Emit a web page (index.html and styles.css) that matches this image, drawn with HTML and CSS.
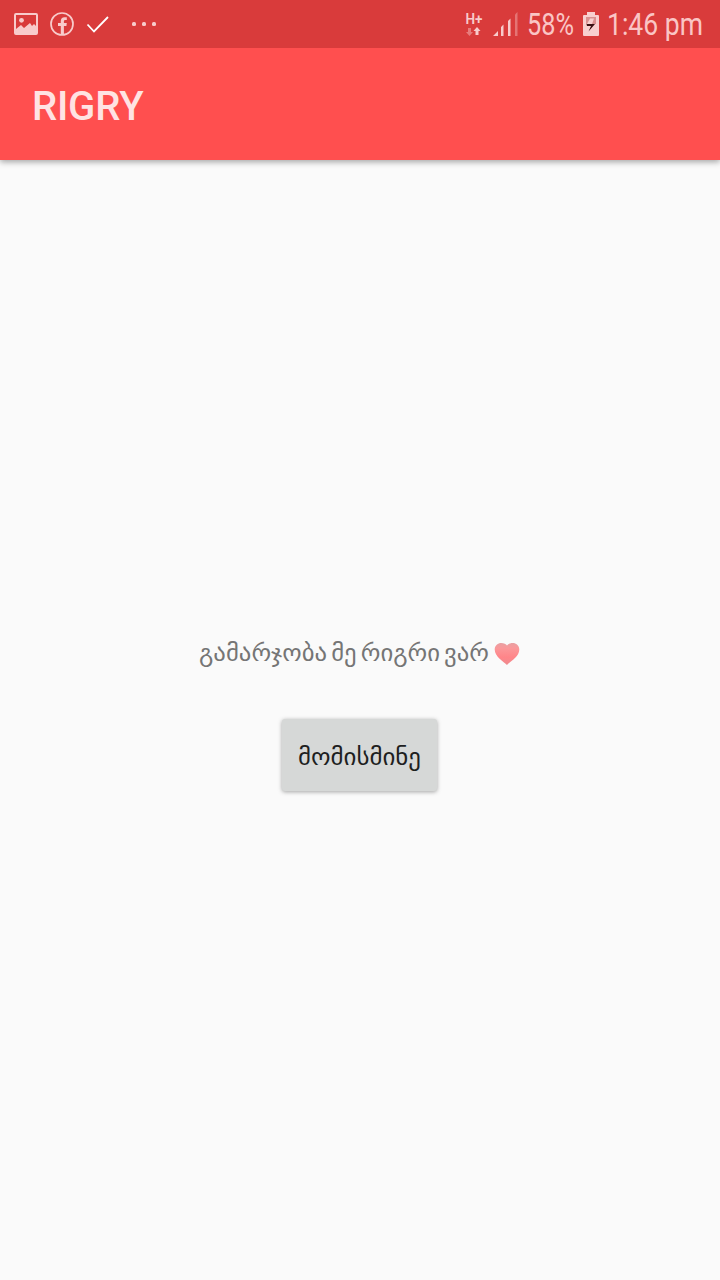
FILE: index.html
```html
<!DOCTYPE html>
<html lang="ka">
<head>
<meta charset="utf-8">
<title>RIGRY</title>
<link rel="stylesheet" href="styles.css">
</head>
<body>
<div class="screen">
  <header class="status">
    <div class="notifications">
      <svg width="24" height="22" viewBox="0 0 24 22"><path fill="currentColor" fill-rule="evenodd" d="M2 0h20q2 0 2 2v18q0 2-2 2H2q-2 0-2-2V2Q0 0 2 0zM2 2v14l5-4 3 3 6-5 2 3 2-2 2 2V2z"/><circle cx="7.5" cy="7.3" r="2.4" fill="currentColor"/></svg>
      <svg width="24" height="24" viewBox="0 0 24 24"><circle cx="12" cy="12" r="11" fill="none" stroke="currentColor" stroke-width="1.7"/><path fill="currentColor" d="M10.800 23V14H8v-3h2.800V9q0-3.800 3.800-3.800h2.200V8h-1.500q-1.400 0-1.400 1.300V11h2.900l-.4 3h-2.500v9z"/></svg>
      <svg class="check" width="24" height="18" viewBox="0 0 24 18"><path fill="none" stroke="#fff" stroke-width="1.8" d="M1.500 9.500 8 16.500 22 2"/></svg>
      <svg class="more" width="26" height="4" viewBox="0 0 26 4" fill="currentColor"><rect width="4" height="4" rx="1.500"/><rect x="10" width="4" height="4" rx="1.500"/><rect x="20" width="4" height="4" rx="1.500"/></svg>
    </div>
    <div class="system">
      <svg class="network" width="20" height="32" viewBox="0 0 20 32"><text x="-0.500" y="16" class="network-label" textLength="17" lengthAdjust="spacingAndGlyphs">H+</text><path fill="currentColor" opacity=".45" d="M2 20h3v4h2l-3.500 4L0 24h2z"/><path fill="currentColor" d="M9.500 27h3v-4h2L11 19l-3.500 4h2z"/></svg>
      <svg class="signal" width="26" height="24" viewBox="0 0 26 24" fill="currentColor"><path d="M0 24l5-5v5zM8 15l2.500-2.500V24H8zM15 9l2.500-2.500V24H15z"/><path opacity=".4" d="M22 2.500L24.500 0v24H22z"/></svg>
      <svg class="percent" width="48" height="48"><text x="0" y="35" textLength="47" lengthAdjust="spacingAndGlyphs">58%</text></svg>
      <svg class="battery" width="16" height="24" viewBox="0 0 16 24"><path fill="#f8cfcf" d="M4 0h8v3h3q1 0 1 1v19q0 1-1 1H1q-1 0-1-1V4q0-1 1-1h3z"/><path fill="#d99090" d="M3 5h10v7H3z"/><path fill="#f8cfcf" d="M7 6.500h4L9 12H4z"/><path fill="#3b1013" d="M3.500 12H12l-6.500 7.500L8 14H4z"/></svg>
      <svg class="clock" width="98" height="48"><text x="0" y="35" textLength="96" lengthAdjust="spacingAndGlyphs">1:46 pm</text></svg>
    </div>
  </header>
  <div class="toolbar"><h1 class="title">RIGRY</h1></div>
  <main class="content">
    <div class="greeting">
      <svg width="291" height="40"><text x="0" y="26" textLength="290" lengthAdjust="spacingAndGlyphs">გამარჯობა მე რიგრი ვარ</text></svg>
      <svg class="heart" width="26" height="24" viewBox="0 0 26 24"><defs><linearGradient id="heart-fill" x1="0" y1="0" x2="0" y2="1"><stop offset="0" stop-color="#e8a0a2"/><stop offset=".25" stop-color="#fb9799"/><stop offset=".65" stop-color="#ff8589"/><stop offset="1" stop-color="#ee8c90"/></linearGradient></defs><path fill="url(#heart-fill)" d="M13 23C9 19 .7 14.500 .7 7.500 .7 3.500 4 1 7.200 1 10 1 12 2 13 3.500 14 2 16 1 18.800 1 22 1 25.300 3.500 25.300 7.500 25.300 14.500 17 19 13 23z"/></svg>
    </div>
    <button class="button"><svg width="123" height="40"><text x="0" y="29.500" textLength="123" lengthAdjust="spacingAndGlyphs">მომისმინე</text></svg></button>
  </main>
</div>
</body>
</html>
```
FILE: styles.css
```css
body { margin: 0; }
svg { display: block; flex: none; overflow: visible; }
.screen { display: flex; flex-direction: column; height: 1280px; background: #fafafa; font-family: Roboto, "DejaVu Sans", sans-serif; overflow: hidden; }
.status { position: relative; z-index: 1; display: flex; justify-content: space-between; align-items: center; height: 48px; background: #d93b3b; color: #f8cbcb; }
.notifications { display: flex; align-items: center; gap: 12px; padding-left: 14px; }
.more { margin-left: 10px; }
.system { display: flex; align-items: center; padding-right: 15px; fill: currentColor; }
.network { margin-right: 7px; }
.network-label { font-size: 15px; font-weight: 600; }
.signal { margin-right: 8px; }
.percent, .clock { font-size: 31px; color: #fac5c5; }
.percent { margin-right: 8px; }
.battery { margin-right: 8px; }
.toolbar { display: flex; align-items: center; height: 112px; padding: 6px 32px 0; box-sizing: border-box; background: #ff4f4f; box-shadow: 0 2px 6px rgba(0, 0, 0, .35); }
.title { margin: 0; font-size: 40px; font-weight: 500; line-height: 48px; letter-spacing: -0.2px; color: #ffe3e3; }
.content { display: flex; flex-direction: column; align-items: center; padding-top: 475px; }
.greeting { display: flex; align-items: center; gap: 4px; height: 40px; padding-right: 2px; font-family: "DejaVu Sans", sans-serif; font-size: 23px; word-spacing: -3.5px; fill: #757575; }
.heart { margin-bottom: 3px; }
.button { display: flex; align-items: center; justify-content: center; box-sizing: border-box; width: 155px; height: 72px; margin: 44px 1px 0 0; padding: 0; border: 0; border-radius: 3px; background: #d6d8d7; box-shadow: 0 1px 4px rgba(0, 0, 0, .35); font-family: "DejaVu Sans", sans-serif; font-size: 23px; fill: #1e1f1f; }
```
